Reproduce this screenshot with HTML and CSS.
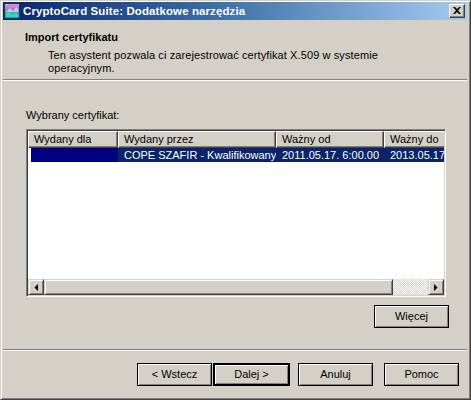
FILE: index.html
```html
<!DOCTYPE html>
<html lang="pl">
<head>
<meta charset="utf-8">
<title>CryptoCard Suite</title>
<link rel="stylesheet" href="styles.css">
</head>
<body>
<div class="window">
  <div class="titlebar">
    <svg class="app-icon" width="16" height="16" viewBox="0 0 16 16">
      <defs>
        <linearGradient id="ig" x1="0" y1="0" x2="0" y2="1">
          <stop offset="0" stop-color="#c8a0e0"/>
          <stop offset="0.45" stop-color="#b070c8"/>
          <stop offset="0.55" stop-color="#30c0b0"/>
          <stop offset="1" stop-color="#10a0a0"/>
        </linearGradient>
      </defs>
      <rect x="0.5" y="0.5" width="15" height="15" fill="url(#ig)" stroke="#203060"/>
      <path d="M2 9 L6 5 L9 8 L12 4 L14 6 L14 9 Z" fill="#e8d0f0" opacity="0.8"/>
      <path d="M2 11 L5 9 L8 12 L12 10 L14 12 L14 14 L2 14 Z" fill="#40e0c0" opacity="0.8"/>
    </svg>
    <span class="title-text">CryptoCard Suite: Dodatkowe narzędzia</span>
    <div class="close-btn">
      <svg width="8" height="7" viewBox="0 0 8 7"><path d="M0 0 L2 0 L4 2 L6 0 L8 0 L5 3.5 L8 7 L6 7 L4 5 L2 7 L0 7 L3 3.5 Z" fill="#000"/></svg>
    </div>
  </div>

  <div class="header">
    <div class="header-title">Import certyfikatu</div>
    <div class="header-desc">Ten asystent pozwala ci zarejestrować certyfikat X.509 w systemie operacyjnym.</div>
  </div>
  <div class="sep"></div>

  <div class="body">
    <div class="label">Wybrany certyfikat:</div>
    <div class="listbox">
      <div class="list-head">
        <div class="col c1">Wydany dla</div>
        <div class="col c2">Wydany przez</div>
        <div class="col c3">Ważny od</div>
        <div class="col c4">Ważny do</div>
      </div>
      <div class="list-rows">
        <div class="row selected">
          <div class="cell c1"><span class="redact"></span></div>
          <div class="cell c2">COPE SZAFIR - Kwalifikowany</div>
          <div class="cell c3">2011.05.17. 6:00.00</div>
          <div class="cell c4">2013.05.17</div>
        </div>
      </div>
      <div class="hscroll">
        <div class="sb-btn"><svg width="4" height="7" viewBox="0 0 4 7"><path d="M4 0 L4 7 L0.5 3.5 Z" fill="#000"/></svg></div>
        <div class="sb-thumb"></div>
        <div class="sb-track"></div>
        <div class="sb-btn"><svg width="4" height="7" viewBox="0 0 4 7"><path d="M0 0 L0 7 L3.5 3.5 Z" fill="#000"/></svg></div>
      </div>
    </div>
    <div class="more-row">
      <div class="btn more">Więcej</div>
    </div>
  </div>
  <div class="sep"></div>
  <div class="footer">
    <div class="btn">&lt; Wstecz</div>
    <div class="btn default">Dalej &gt;</div>
    <div class="btn gap">Anuluj</div>
    <div class="btn gap">Pomoc</div>
  </div>
</div>
</body>
</html>
```

FILE: styles.css
```css
* { box-sizing: border-box; }
html, body { margin: 0; padding: 0; background: #d4d0c8; }
body {
  font-family: "Liberation Sans", Arial, sans-serif;
  font-size: 11px;
  color: #000;
}
.window {
  width: 471px;
  height: 400px;
  background: #d4d0c8;
  border-top: 1px solid #d4d0c8;
  border-left: 1px solid #d4d0c8;
  border-right: 1px solid #404040;
  border-bottom: 1px solid #404040;
  box-shadow: inset 1px 1px #fff, inset -1px -1px #808080;
  padding: 1px 3px 3px 2px;
  display: flex;
  flex-direction: column;
}
.titlebar {
  height: 18px;
  background: linear-gradient(to right, #0a246a 0%, #3a6ea5 45%, #a6caf0 100%);
  display: flex;
  align-items: center;
  padding: 0 2px 0 1px;
  color: #fff;
  flex: none;
}
.app-icon { flex: none; margin-right: 3px; }
.title-text {
  font-weight: bold;
  font-size: 11.5px;
  letter-spacing: 0.1px;
  white-space: nowrap;
  flex: 1;
}
.close-btn {
  width: 16px;
  height: 14px;
  background: #d4d0c8;
  border-top: 1px solid #fff;
  border-left: 1px solid #fff;
  border-right: 1px solid #404040;
  border-bottom: 1px solid #404040;
  box-shadow: inset -1px -1px #808080;
  display: flex;
  align-items: center;
  justify-content: center;
  padding-bottom: 1px;
  padding-right: 1px;
}
.header {
  height: 59px;
  padding: 11px 0 0 22px;
  flex: none;
}
.header-title {
  font-weight: bold;
  line-height: 13px;
}
.header-desc {
  margin-top: 5px;
  padding-left: 23px;
  width: 360px;
  line-height: 13px;
  letter-spacing: 0.1px;
}
.sep {
  height: 2px;
  border-top: 1px solid #808080;
  border-bottom: 1px solid #fff;
  flex: none;
}
.body {
  height: 268px;
  padding: 28px 0 0 23px;
  flex: none;
}
.label { line-height: 13px; height: 20px; }
.listbox {
  width: 420px;
  height: 168px;
  background: #fff;
  border-top: 1px solid #808080;
  border-left: 1px solid #808080;
  border-right: 1px solid #fff;
  border-bottom: 1px solid #fff;
  box-shadow: inset 1px 1px #404040, inset -1px -1px #d4d0c8;
  padding: 1px;
  display: flex;
  flex-direction: column;
  overflow: hidden;
}
.list-head {
  display: flex;
  height: 17px;
  flex: none;
  overflow: hidden;
}
.col {
  flex: none;
  background: #d4d0c8;
  border-top: 1px solid #fff;
  border-left: 1px solid #fff;
  border-right: 1px solid #404040;
  border-bottom: 1px solid #404040;
  box-shadow: inset -1px -1px #808080;
  padding: 1px 0 0 5px;
  line-height: 13px;
  white-space: nowrap;
  overflow: hidden;
}
.c1 { width: 90px; }
.c2 { width: 158px; }
.c3 { width: 108px; }
.c4 { width: 80px; }
.list-rows { flex: 1; overflow: hidden; }
.row {
  display: flex;
  height: 14px;
  line-height: 14px;
  white-space: nowrap;
}
.row.selected .cell { background: #0a246a; color: #fff; }
.cell { flex: none; padding-left: 6px; overflow: hidden; }
.row.selected .cell.c1 { background: transparent; padding-left: 3px; }
.redact {
  display: block;
  width: 91px;
  height: 14px;
  background: #000080;
  box-shadow: 18px 4px 4px -1px rgba(0, 0, 40, 0.55);
}
.hscroll {
  height: 16px;
  display: flex;
  flex: none;
}
.sb-btn {
  width: 16px;
  height: 16px;
  flex: none;
  background: #d4d0c8;
  border-top: 1px solid #d4d0c8;
  border-left: 1px solid #d4d0c8;
  border-right: 1px solid #404040;
  border-bottom: 1px solid #404040;
  box-shadow: inset 1px 1px #fff, inset -1px -1px #808080;
  display: flex;
  align-items: center;
  justify-content: center;
}
.sb-thumb {
  width: 349px;
  flex: none;
  background: #d4d0c8;
  border-top: 1px solid #d4d0c8;
  border-left: 1px solid #d4d0c8;
  border-right: 1px solid #404040;
  border-bottom: 1px solid #404040;
  box-shadow: inset 1px 1px #fff, inset -1px -1px #808080;
}
.sb-track {
  flex: 1;
  background-color: #fff;
  background-image: repeating-conic-gradient(#d4d0c8 0 25%, #fff 0 50%);
  background-size: 2px 2px;
}
.more-row {
  display: flex;
  justify-content: flex-end;
  width: 423px;
  margin-top: 8px;
}
.btn {
  width: 75px;
  height: 23px;
  border: 1px solid #000;
  box-shadow: inset 1px 1px #fff, inset -1px -1px #808080;
  display: flex;
  align-items: center;
  justify-content: center;
  padding-bottom: 1px;
  flex: none;
}
.btn.default {
  width: 77px;
  border-width: 2px;
  margin-left: 1px;
}
.btn.gap { margin-left: 8px; }
.btn.gap + .btn.gap { margin-left: 11px; }
.footer {
  display: flex;
  padding: 12px 0 0 134px;
}
```
